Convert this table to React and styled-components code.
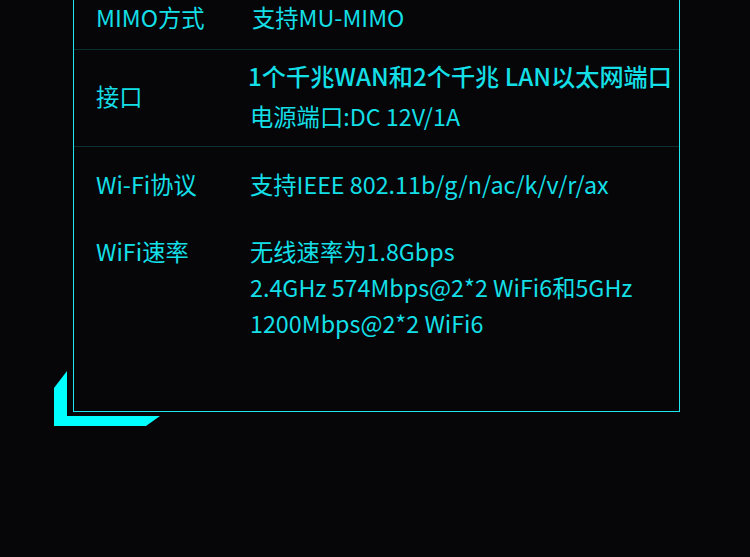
import React from 'react'
import styled, { createGlobalStyle } from 'styled-components'

const GlobalStyle = createGlobalStyle`
    html, body {
        margin: 0;
        padding: 0;
        background-color: #060609;
    }
    body {
        font-family: "Noto Sans CJK SC", "Noto Sans", sans-serif;
        color: #14dfe6;
    }
`

const Page = styled.div`
    width: 750px;
    height: 557px;
    overflow: hidden;
    background-color: #060609;
`

const Frame = styled.div`
    position: relative;
    width: 607px;
    margin-left: 73px;
`

const Panel = styled.div`
    position: relative;
    z-index: 1;
    border: 1px solid #1de6ee;
    border-top: none;
    padding-bottom: ${({ $bottom }) => $bottom}px;
`

/* cyan bracket peeking out under the bottom-left corner */
const Bracket = styled.svg`
    position: absolute;
    left: -19px;
    bottom: -15px;
    z-index: 0;
`

const Row = styled.div`
    display: grid;
    grid-template-columns: 154px 1fr;
    align-items: center;
    padding: ${({ $pt }) => $pt}px 0 ${({ $pb }) => $pb}px 22px;
    border-bottom: ${({ $line }) => ($line ? '1px solid #0c3032' : 'none')};
    font-size: 23.3px;
    line-height: ${({ $lh }) => $lh}px;
`

const Label = styled.div`
    align-self: ${({ $top }) => ($top ? 'start' : 'center')};
    white-space: nowrap;
`

const Values = styled.div`
    display: flex;
    flex-direction: column;
    white-space: nowrap;
`

const Strong = styled.span`
    font-size: 24.2px;
    font-weight: 500;
    margin-left: -2px;
`

const App = () => {
    return (
        <Page>
            <GlobalStyle />
            <Frame>
                <Panel $bottom={70}>
                    <Row $pt={0} $pb={15} $lh={34} $line>
                        <Label>MIMO方式</Label>
                        <Values>
                            <span style={{ marginLeft: 2 }}>支持MU-MIMO</span>
                        </Values>
                    </Row>
                    <Row $pt={6} $pb={10} $lh={40} $line>
                        <Label>接口</Label>
                        <Values>
                            <Strong>1个千兆WAN和2个千兆 LAN以太网端口</Strong>
                            <span>电源端口:DC 12V/1A</span>
                        </Values>
                    </Row>
                    <Row $pt={19} $pb={31} $lh={36}>
                        <Label>Wi-Fi协议</Label>
                        <Values>
                            <span>支持IEEE 802.11b/g/n/ac/k/v/r/ax</span>
                        </Values>
                    </Row>
                    <Row $pt={0} $pb={0} $lh={36}>
                        <Label $top>WiFi速率</Label>
                        <Values>
                            <span>无线速率为1.8Gbps</span>
                            <span>2.4GHz 574Mbps@2*2 WiFi6和5GHz</span>
                            <span>1200Mbps@2*2 WiFi6</span>
                        </Values>
                    </Row>
                </Panel>
                <Bracket width="107" height="56" viewBox="0 0 107 56">
                    <polygon
                        points="0,17 13,0 13,45 106,45 92,55 0,55"
                        fill="#00ffff"
                    />
                </Bracket>
            </Frame>
        </Page>
    )
}

export default App
